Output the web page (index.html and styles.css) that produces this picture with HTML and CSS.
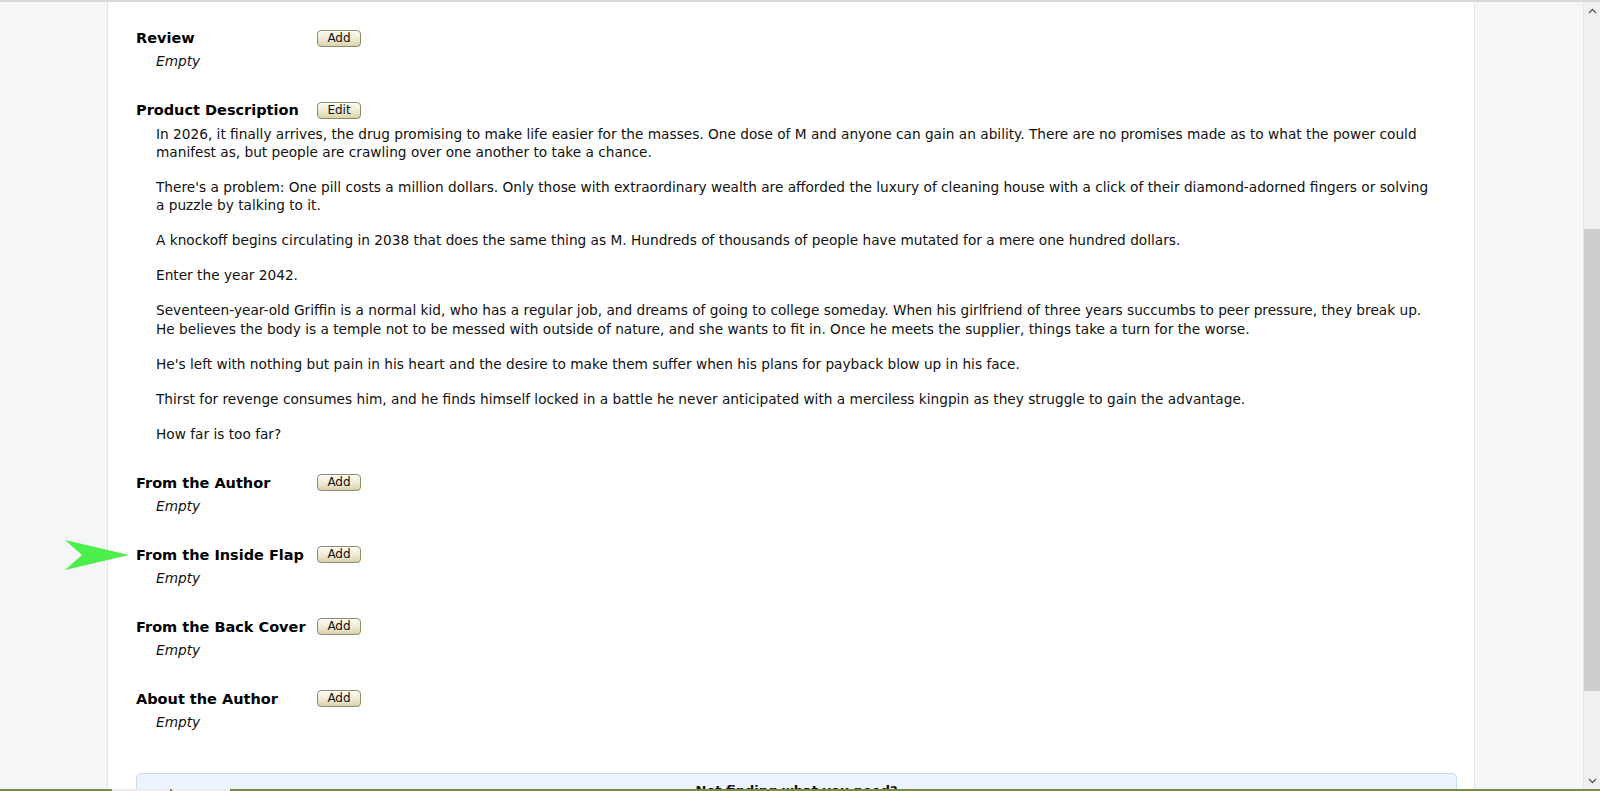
FILE: index.html
```html
<!DOCTYPE html>
<html lang="en">
<head>
    <meta charset="UTF-8">
    <title>Book Details - Editorial Reviews</title>
    <link rel="stylesheet" href="styles.css">
</head>
<body>
    <div class="topline"></div>

    <div class="middle">
        <div class="page">
            <div class="gutter gutter-left"></div>

            <main class="panel">
                <div class="edge"><span class="edge-a"></span><span class="edge-b"></span></div>

                <div class="sections">
                    <section class="field">
                        <div class="field-head"><h3>Review</h3><button class="btn">Add</button></div>
                        <div class="field-body empty">Empty</div>
                    </section>

                    <section class="field">
                        <div class="field-head"><h3>Product Description</h3><button class="btn">Edit</button></div>
                        <div class="field-body desc">
                            <p>In 2026, it finally arrives, the drug promising to make life easier for the masses. One dose of M and anyone can gain an ability. There are no promises made as to what the power could manifest as, but people are crawling over one another to take a chance.</p>
                            <p>There's a problem: One pill costs a million dollars. Only those with extraordinary wealth are afforded the luxury of cleaning house with a click of their diamond-adorned fingers or solving<br>a puzzle by talking to it.</p>
                            <p>A knockoff begins circulating in 2038 that does the same thing as M. Hundreds of thousands of people have mutated for a mere one hundred dollars.</p>
                            <p>Enter the year 2042.</p>
                            <p>Seventeen-year-old Griffin is a normal kid, who has a regular job, and dreams of going to college someday. When his girlfriend of three years succumbs to peer pressure, they break up. He believes the body is a temple not to be messed with outside of nature, and she wants to fit in. Once he meets the supplier, things take a turn for the worse.</p>
                            <p>He's left with nothing but pain in his heart and the desire to make them suffer when his plans for payback blow up in his face.</p>
                            <p>Thirst for revenge consumes him, and he finds himself locked in a battle he never anticipated with a merciless kingpin as they struggle to gain the advantage.</p>
                            <p>How far is too far?</p>
                        </div>
                    </section>

                    <section class="field">
                        <div class="field-head"><h3>From the Author</h3><button class="btn">Add</button></div>
                        <div class="field-body empty">Empty</div>
                    </section>

                    <section class="field">
                        <div class="field-head"><h3>From the Inside Flap</h3><button class="btn">Add</button></div>
                        <div class="field-body empty">Empty</div>
                    </section>

                    <section class="field">
                        <div class="field-head"><h3>From the Back Cover</h3><button class="btn">Add</button></div>
                        <div class="field-body empty">Empty</div>
                    </section>

                    <section class="field">
                        <div class="field-head"><h3>About the Author</h3><button class="btn">Add</button></div>
                        <div class="field-body empty">Empty</div>
                    </section>
                </div>

                <div class="notice">Not finding what you need?</div>
            </main>

            <div class="gutter gutter-right"></div>

            <!-- green pointer drawn over the page -->
            <svg class="pointer" width="66" height="32" viewBox="0 0 66 32">
                <polygon points="0,1 64,16 0,31 17,16" fill="#4bef4b"/>
            </svg>
        </div>

        <div class="scrollbar">
            <div class="sb-btn">
                <svg width="9" height="6" viewBox="0 0 9 6"><polyline points="1,5 4.5,1.5 8,5" fill="none" stroke="#555" stroke-width="1.3"/></svg>
            </div>
            <div class="sb-track"><div class="sb-thumb"></div></div>
            <div class="sb-btn">
                <svg width="9" height="6" viewBox="0 0 9 6"><polyline points="1,1 4.5,4.5 8,1" fill="none" stroke="#555" stroke-width="1.3"/></svg>
            </div>
        </div>
    </div>

    <div class="bottombar"><span class="tab tab-first"></span><span class="tab"></span></div>
</body>
</html>
```

FILE: styles.css
```css
:root {
    --gutter-bg: #f5f6f8;
    --line: #e3e4e6;
    --text: #111;
}

html, body {
    margin: 0;
    height: 100%;
    overflow: hidden;
}

body {
    font-family: Verdana, "DejaVu Sans", sans-serif;
    font-size: 13.7px;
    color: var(--text);
    background: var(--gutter-bg);
}

.topline {
    height: 2px;
    background: #d9d9db;
}

.middle {
    display: flex;
    height: 787px;
}

.page {
    flex: 1;
    display: flex;
    position: relative;
    overflow: hidden;
}

.gutter {
    background: var(--gutter-bg);
}

.gutter-left {
    width: 107px;
    border-right: 1px solid var(--line);
}

.gutter-right {
    flex: 1;
    border-left: 1px solid var(--line);
}

.panel {
    width: 1321px;
    padding: 0 17px 0 28px;
    background: #fff;
    display: flex;
    flex-direction: column;
}

.edge {
    display: flex;
    height: 1px;
    margin-left: -28px;
}

.edge span {
    background: #a9b6c7;
}

.edge-a {
    margin-left: 16px;
    width: 12px;
}

.edge-b {
    margin-left: 132px;
    width: 1189px;
}

.sections {
    padding-top: 23px;
}

.field {
    margin-bottom: 26.6px;
}

.field-head {
    display: flex;
    align-items: center;
    height: 26px;
}

.field-head h3 {
    margin: 0;
    min-width: 181px;
    font-size: 14.5px;
    font-weight: bold;
    color: #000;
    white-space: nowrap;
}

.btn {
    width: 44px;
    height: 17px;
    padding: 0;
    font-family: Verdana, "DejaVu Sans", sans-serif;
    font-size: 12px;
    line-height: 15px;
    color: #111;
    border: 1px solid #8f8a6c;
    border-radius: 4px;
    background: linear-gradient(to bottom, #fbfaf1 0%, #eeead2 55%, #dad3aa 100%);
    box-shadow: inset 0 1px 0 #fff;
    cursor: pointer;
}

.field-body {
    margin-left: 20px;
    padding-top: 1px;
    line-height: 18.4px;
}

.empty {
    font-style: italic;
}

.desc {
    padding-top: 1.5px;
    margin-right: 21px;
}

.desc p {
    margin: 0 0 16.6px;
}

.desc p:last-child {
    margin-bottom: 0;
}

.notice {
    margin-top: 15px;
    height: 60px;
    padding-top: 9px;
    box-sizing: border-box;
    background: #ebf3fd;
    border: 1px solid #c8dbef;
    border-radius: 5px;
    text-align: center;
    font-weight: bold;
    font-size: 13px;
}

.pointer {
    position: absolute;
    left: 65px;
    top: 537px;
}

.scrollbar {
    width: 17px;
    display: flex;
    flex-direction: column;
    background: #f0f0f0;
    border-left: 1px solid #e6e6e6;
    box-sizing: border-box;
}

.sb-btn {
    height: 17px;
    display: flex;
    align-items: center;
    justify-content: center;
}

.sb-track {
    flex: 1;
    padding-top: 210px;
}

.sb-thumb {
    height: 462px;
    background: #cdcdcd;
}

.bottombar {
    display: flex;
    height: 2px;
    background: #7b8c3a;
}

.tab {
    width: 58px;
    height: 2px;
    margin-left: 2px;
    background: #ececec;
}

.tab-first {
    margin-left: 112px;
}
```
